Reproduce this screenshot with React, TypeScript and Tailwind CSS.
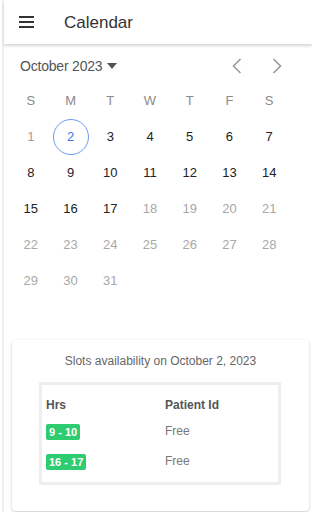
import React from "react";

const weekdays = ["S", "M", "T", "W", "T", "F", "S"];

function Day({ d }: { d: number | null }) {
  if (d === null) return <div className="h-[36px]" />;
  let cls = "text-[#222222]";
  if (d === 1) cls = "text-[#9e9e9e]";
  if (d >= 18) cls = "text-[#a8a8a8]";
  if (d === 2) {
    return (
      <div className="h-[36px] flex items-center justify-center">
        <div className="w-[36px] h-[36px] rounded-full border border-[#6a9bf4] flex items-center justify-center text-[#3b78e7] text-[13px]">
          2
        </div>
      </div>
    );
  }
  return (
    <div className={`h-[36px] flex items-center justify-center text-[13px] ${cls}`}>{d}</div>
  );
}

export default function App() {
  const days: (number | null)[] = [];
  for (let i = 1; i <= 31; i++) days.push(i);
  while (days.length < 35) days.push(null);

  return (
    <div className="w-[312px] h-[512px] bg-white pl-[2px] font-['Liberation_Sans',Arial,sans-serif] overflow-hidden">
      <div className="border-l-2 border-[#efefef] h-[512px] w-[310px] flex flex-col">
        <div className="h-[44px] shrink-0 rounded-tl-[4px] bg-white shadow-[0_2px_3px_rgba(0,0,0,0.16)] flex items-center relative z-10">
          <div className="ml-[15px] w-[15px] flex flex-col gap-[3px]">
            <div className="h-[2px] bg-[#333333]" />
            <div className="h-[2px] bg-[#333333]" />
            <div className="h-[2px] bg-[#333333]" />
          </div>
          <div className="ml-[30px] text-[17px] leading-[22px] pt-[1px] text-[#333333]">Calendar</div>
        </div>

        <div className="h-[39px] shrink-0 pt-[12px] flex items-start">
          <div className="ml-[16px] h-[20px] flex items-center text-[14px] text-[#555555] tracking-[-0.2px]">
            October 2023
            <svg className="ml-[5px]" width="10" height="6" viewBox="0 0 10 6">
              <path d="M0 0 L10 0 L5 6 Z" fill="#555555" />
            </svg>
          </div>
          <div className="ml-auto flex items-center h-[20px] mr-[30px] gap-[30px]">
            <svg width="10" height="16" viewBox="0 0 10 16">
              <path d="M8.5 1 L1.5 8 L8.5 15" fill="none" stroke="#9a9a9a" strokeWidth="1.6" />
            </svg>
            <svg width="10" height="16" viewBox="0 0 10 16">
              <path d="M1.5 1 L8.5 8 L1.5 15" fill="none" stroke="#9a9a9a" strokeWidth="1.6" />
            </svg>
          </div>
        </div>

        <div className="ml-[7px] w-[278px] grid grid-cols-7">
          {weekdays.map((w, i) => (
            <div key={i} className="h-[36px] flex items-center justify-center text-[13px] text-[#8a8a8a]">
              {w}
            </div>
          ))}
          {days.map((d, i) => (
            <Day key={i} d={d} />
          ))}
        </div>

        <div className="mt-[41px] ml-[8px] w-[297px] h-[171px] shrink-0 rounded-[4px] bg-white shadow-[0_1px_3px_rgba(0,0,0,0.22)] pt-[14px]">
          <div className="text-center text-[12px] leading-[15px] text-[#666666]">
            Slots availability on October 2, 2023
          </div>
          <div className="mt-[13px] ml-[27px] w-[242px] h-[103px] border-[3px] border-[#eeeeee] pl-[4px] pt-[12px]">
            <div className="flex h-[16px] items-center text-[12px] font-bold text-[#555555]">
              <div className="w-[119px]">Hrs</div>
              <div>Patient Id</div>
            </div>
            <div className="flex h-[16px] items-center mt-[10px]">
              <div className="w-[119px]">
                <span className="inline-block bg-[#2ecc71] text-white font-bold text-[11px] leading-[16px] px-[3px] rounded-[2px]">
                  9 - 10
                </span>
              </div>
              <div className="text-[12px] text-[#777777]">Free</div>
            </div>
            <div className="flex h-[16px] items-center mt-[14px]">
              <div className="w-[119px]">
                <span className="inline-block bg-[#2ecc71] text-white font-bold text-[11px] leading-[16px] px-[3px] rounded-[2px]">
                  16 - 17
                </span>
              </div>
              <div className="text-[12px] text-[#777777]">Free</div>
            </div>
          </div>
        </div>
      </div>
    </div>
  );
}
